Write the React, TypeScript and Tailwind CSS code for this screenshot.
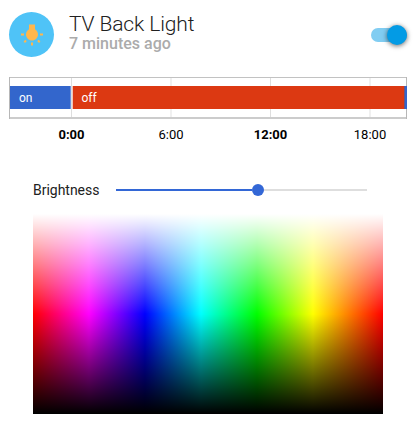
function Header() {
  return (
    <header className="flex h-[45px] items-start">
      <div className="flex size-[45px] shrink-0 items-center justify-center rounded-full bg-[#4fc3f7]">
        <svg viewBox="0 0 24 24" className="size-6" fill="#ffb74d">
          <path d="M3.55 18.54l1.41 1.41 1.8-1.79-1.42-1.41-1.79 1.79zM11 22.45h2V19.5h-2v2.95zM4 10.5H1v2h3v-2zm11-4.19V1.5H9v4.81C7.21 7.35 6 9.28 6 11.5c0 3.31 2.69 6 6 6s6-2.69 6-6c0-2.22-1.21-4.15-3-5.19zm5 4.19v2h3v-2h-3zm-2.76 7.66l1.79 1.8 1.41-1.41-1.8-1.79-1.4 1.4z" />
        </svg>
      </div>
      <div className="ml-[15px] flex-1">
        <h1 className="text-[21px] leading-6 font-light tracking-[-0.12px] text-[#212121]">TV Back Light</h1>
        <p className="text-[16px] leading-4 font-medium text-[#ababab]">7 minutes ago</p>
      </div>
      <button
        role="switch"
        aria-checked="true"
        aria-label="TV Back Light"
        className="mt-4 flex h-3.5 w-9 items-center justify-end rounded-full bg-[#81cdf2]"
      >
        <span className="size-5 shrink-0 rounded-full bg-[#039be5] shadow-[0_1px_5px_rgba(0,0,0,0.6)]" />
      </button>
    </header>
  );
}

function Timeline() {
  return (
    <svg
      width="398"
      height="70"
      viewBox="0 0 398 70"
      className="mt-5 block shrink-0"
      fontFamily="Roboto, sans-serif"
      fontSize="12"
    >
      <path d="M62.5 1v40M261.5 1v40" stroke="#dedede" />
      <path d="M162 1v40M361 1v40" stroke="#f0f0f0" strokeWidth="2" />
      <rect x="0" y="0" width="398" height="1" fill="#c2c2c2" />
      <rect x="0" y="40" width="398" height="2" fill="#cccccc" />
      <rect x="0" y="0" width="1" height="42" fill="#b7b7b7" />
      <rect x="397" y="0" width="1" height="42" fill="#b7b7b7" />
      <rect x="1" y="9" width="60.7" height="23" fill="#3366cc" />
      <rect x="63.7" y="9" width="331.8" height="23" fill="#dc3912" />
      <rect x="395" y="9" width="1.5" height="23" fill="#6b5583" />
      <rect x="396" y="9" width="2" height="23" fill="#3366cc" />
      <g fill="#fff">
        <text x="10" y="25">on</text>
        <text x="72.5" y="25">off</text>
      </g>
      <g fill="#000" textAnchor="middle" fontSize="13">
        <text x="62.5" y="62" fontWeight="700">0:00</text>
        <text x="162" y="62">6:00</text>
        <text x="261.5" y="62" fontWeight="700">12:00</text>
        <text x="361" y="62">18:00</text>
      </g>
    </svg>
  );
}

function BrightnessSlider() {
  return (
    <div className="mt-[33px] ml-6 flex h-5 items-center">
      <label className="w-[83px] text-[14px] leading-5 tracking-[-0.02px] text-[#212121]">Brightness</label>
      <div className="flex w-[251px] items-center">
        <div className="h-0.5 w-[136px] bg-[#3367d6]" />
        <div className="size-3 rounded-full bg-[#3367d6]" />
        <div className="h-0.5 flex-1 bg-[#dedede]" />
      </div>
    </div>
  );
}

function ColorPicker() {
  return (
    <div className="mt-3.5 ml-6 h-[200px] w-[350px] shrink-0 bg-[linear-gradient(to_bottom,rgba(255,255,255,1)_0%,rgba(255,255,255,0)_50%,rgba(0,0,0,0)_50%,rgba(0,0,0,1)_100%),linear-gradient(to_right,#ff0000_0%,#ff00ff_16%,#0000ff_32%,#00ffff_48%,#00ff00_64%,#ffff00_80%,#ff0000_100%)]" />
  );
}

export default function App() {
  return (
    <main className="flex h-[425px] w-[420px] flex-col overflow-hidden bg-white pt-3 pr-[13px] pl-[9px] font-['Roboto',sans-serif]">
      <Header />
      <Timeline />
      <BrightnessSlider />
      <ColorPicker />
    </main>
  );
}
